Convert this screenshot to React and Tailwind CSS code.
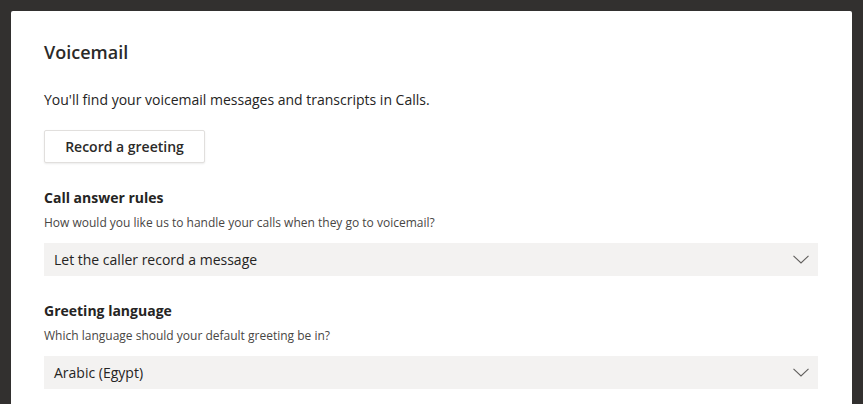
import React from 'react';

// Small chevron used by the dropdowns
function Chevron() {
  return (
    <svg width="16" height="9" viewBox="0 0 16 9" fill="none" className="shrink-0">
      <path d="M0.5 0.8 L8 8 L15.5 0.8" stroke="#605e5c" strokeWidth="1.1" />
    </svg>
  );
}

function Dropdown({ value }) {
  return (
    <div className="flex h-[33px] items-center justify-between bg-[#f3f2f1] pl-[10px] pr-[9px] text-[14px] text-[#252423]">
      <span>{value}</span>
      <Chevron />
    </div>
  );
}

function Section({ title, hint, value }) {
  return (
    <div className="mt-[25px]">
      <div className="text-[14px] font-bold leading-[20px] text-[#252423]">{title}</div>
      <div className="mt-[7px] text-[12px] leading-[16px] text-[#484644]">{hint}</div>
      <div className="mt-[12px]">
        <Dropdown value={value} />
      </div>
    </div>
  );
}

export default function App() {
  return (
    <div
      className="h-[404px] overflow-hidden bg-[#32302f] px-[11px] pt-[11px]"
      style={{ fontFamily: '"Open Sans", "Noto Sans", sans-serif' }}
    >
      <div className="h-full rounded-t-[2px] bg-white pl-[33px] pr-[34px] pt-[29px]">
        <h1 className="text-[18px] font-semibold leading-[24px] text-[#2b2a29]">Voicemail</h1>
        <p className="mt-[26px] text-[14px] leading-[20px] text-[#252423]">
          You'll find your voicemail messages and transcripts in Calls.
        </p>
        <button className="mt-[20px] h-[33px] w-[161px] rounded-[2px] border border-[#e1dfdd] bg-white text-[14px] font-semibold text-[#2b2a29] shadow-[0_1px_2px_rgba(0,0,0,0.08)]">
          Record a greeting
        </button>
        <Section
          title="Call answer rules"
          hint="How would you like us to handle your calls when they go to voicemail?"
          value="Let the caller record a message"
        />
        <Section
          title="Greeting language"
          hint="Which language should your default greeting be in?"
          value="Arabic (Egypt)"
        />
      </div>
    </div>
  );
}
